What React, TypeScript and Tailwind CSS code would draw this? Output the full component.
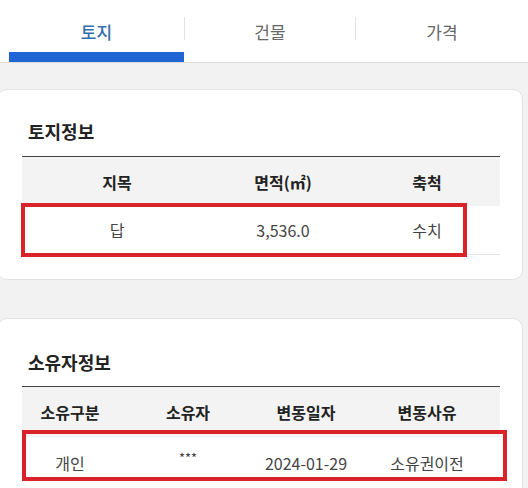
import React from 'react';

const font = { fontFamily: '"Noto Sans CJK KR", "Noto Sans", sans-serif' };

function App() {
  return (
    <div className="h-screen bg-[#f2f2f2] overflow-hidden" style={font}>
      {/* Tabs */}
      <nav className="flex h-[63px] bg-white border-b border-[#dcdcdc] pl-[9px]">
        <div className="w-[175px] h-[62px] flex justify-center pt-[20px] border-b-[10px] border-[#1f66d4]">
          <span className="text-[17px] leading-[24px] font-medium text-[#356fb0]">토지</span>
        </div>
        <div className="w-px h-[23px] mt-[17px] bg-[#e2e2e2]" />
        <div className="w-[170px] flex justify-center pt-[20px]">
          <span className="text-[17px] leading-[24px] text-[#666]">건물</span>
        </div>
        <div className="w-px h-[23px] mt-[17px] bg-[#e2e2e2]" />
        <div className="flex-1 flex justify-center pt-[20px]">
          <span className="text-[17px] leading-[24px] text-[#666]">가격</span>
        </div>
      </nav>

      {/* 토지정보 */}
      <section className="mt-[26px] -ml-[3px] w-[526px] bg-white border border-[#e2e2e2] rounded-[10px] pt-[30px] pb-[24px] pl-[24px]">
        <h2 className="pl-[6px] text-[18px] leading-[22px] font-bold text-[#222] mb-[14px]">토지정보</h2>
        <div className="w-[478px] border-t border-[#444]">
          <div className="grid grid-cols-[190px_142px_146px] h-[49px] items-center bg-[#f3f3f3] text-[16px] font-bold text-[#222] text-center">
            <div>지목</div>
            <div>면적(㎡)</div>
            <div>축척</div>
          </div>
          <div className="relative grid grid-cols-[190px_142px_146px] h-[49px] items-center border-b border-[#e6e6e6] text-[16px] text-[#444] text-center">
            <div>답</div>
            <div>3,536.0</div>
            <div>수치</div>
            <div className="absolute -top-[3px] -left-[1px] w-[446px] h-[54px] border-4 border-[#d8232a]" />
          </div>
        </div>
      </section>

      {/* 소유자정보 */}
      <section className="mt-[38px] -ml-[3px] w-[526px] h-[200px] bg-white border border-[#e2e2e2] rounded-[10px] pt-[32px] pl-[24px]">
        <h2 className="pl-[6px] text-[18px] leading-[22px] font-bold text-[#222] mb-[13px]">소유자정보</h2>
        <div className="w-[478px] border-t border-[#444]">
          <div className="grid grid-cols-[96px_140px_96px_146px] h-[50px] items-center bg-[#f3f3f3] text-[16px] font-bold text-[#222] text-center">
            <div>소유구분</div>
            <div>소유자</div>
            <div>변동일자</div>
            <div>변동사유</div>
          </div>
          <div className="relative grid grid-cols-[96px_140px_96px_146px] h-[52px] items-center text-[16px] text-[#444] text-center">
            <div>개인</div>
            <div className="text-[13px] -mt-[10px]">***</div>
            <div>2024-01-29</div>
            <div>소유권이전</div>
            <div className="absolute -top-[7px] left-0 w-[485px] h-[51px] border-4 border-[#d8232a]" />
          </div>
        </div>
      </section>
    </div>
  );
}

export default App;
